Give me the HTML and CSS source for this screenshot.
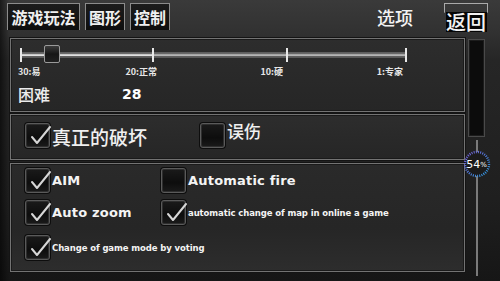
FILE: index.html
```html
<!DOCTYPE html>
<html lang="zh">
<head>
<meta charset="utf-8">
<link rel="stylesheet" href="styles.css">
</head>
<body>
<div class="screen">
  <header class="topbar">
    <nav class="tabs">
      <div class="tab t1">游戏玩法</div>
      <div class="tab t2">图形</div>
      <div class="tab t3">控制</div>
    </nav>
    <div class="title">选项</div>
    <div class="back"><span>返回</span></div>
  </header>
  <div class="main">
    <div class="panels">
      <section class="panel p1">
        <div class="track">
          <span class="tick"></span><span class="seg seg1 lit"></span>
          <span class="tick"></span><span class="seg seg2"></span>
          <span class="tick"></span><span class="seg seg3"></span>
          <span class="tick"></span>
          <span class="thumb"></span>
        </div>
        <div class="labels">
          <span class="lb lb1">30:易</span>
          <span class="lb lb2">20:正常</span>
          <span class="lb lb3">10:硬</span>
          <span class="lb lb4">1:专家</span>
        </div>
        <div class="diff">
          <span class="diff-name">困难</span>
          <span class="diff-val">28</span>
        </div>
      </section>
      <section class="panel p2">
        <div class="opt opt-a">
          <span class="box on"><svg viewBox="0 0 26 26"><path d="M5 14 L10 20 L23 4" /></svg></span>
          <span class="cn big">真正的破坏</span>
        </div>
        <div class="opt opt-b">
          <span class="box"></span>
          <span class="cn mid">误伤</span>
        </div>
      </section>
      <section class="panel p3">
        <div class="grid">
          <div class="opt">
            <span class="box on"><svg viewBox="0 0 26 26"><path d="M5 14 L10 20 L23 4" /></svg></span>
            <span class="en large">AIM</span>
          </div>
          <div class="opt">
            <span class="box"></span>
            <span class="en large">Automatic fire</span>
          </div>
          <div class="opt r2">
            <span class="box on"><svg viewBox="0 0 26 26"><path d="M5 14 L10 20 L23 4" /></svg></span>
            <span class="en large">Auto zoom</span>
          </div>
          <div class="opt r2">
            <span class="box on"><svg viewBox="0 0 26 26"><path d="M5 14 L10 20 L23 4" /></svg></span>
            <span class="en small">automatic change of map in online a game</span>
          </div>
          <div class="opt r3 wide">
            <span class="box on"><svg viewBox="0 0 26 26"><path d="M5 14 L10 20 L23 4" /></svg></span>
            <span class="en small">Change of game mode by voting</span>
          </div>
        </div>
      </section>
    </div>
    <aside class="scroll">
      <div class="scroll-box"></div>
      <div class="scroll-line">
        <div class="badge">
          <svg viewBox="0 0 28 28"><defs><linearGradient id="rg" x1="0" y1="0" x2="1" y2="1"><stop offset="0" stop-color="#7a5bd8"/><stop offset="1" stop-color="#2aa0e8"/></linearGradient></defs><circle cx="14" cy="14" r="12" fill="#1b1b1b" stroke="url(#rg)" stroke-width="2.4" stroke-dasharray="1 1.2"/></svg>
          <span class="pct">54<small>%</small></span>
        </div>
      </div>
    </aside>
  </div>
</div>
</body>
</html>
```
FILE: styles.css
```css
* { box-sizing: border-box; }
html, body { margin: 0; padding: 0; }
body {
  width: 500px; height: 281px; overflow: hidden;
  background: #1b1b1b;
  font-family: "Noto Sans CJK SC", "DejaVu Sans", sans-serif;
  color: #f2f2f2;
}
.screen {
  width: 500px; height: 281px;
  background:
    linear-gradient(90deg, rgba(0,0,0,0.55) 0, rgba(0,0,0,0) 9px),
    linear-gradient(180deg, #3a3a3a 0, #323232 30px, #262626 60px, #1f1f1f 200px, #161616 281px);
  display: flex; flex-direction: column;
}
.topbar {
  height: 38px; display: flex; align-items: flex-start;
  padding: 3px 0 0 7px;
}
.tabs { display: flex; gap: 5px; }
.tab {
  height: 27px; padding: 0 4px;
  background: linear-gradient(#1c1c1c, #0e0e0e);
  border: 1px solid #8c8c8c; border-bottom: none;
  font-size: 16px; font-weight: 700; line-height: 26px;
  color: #f0f0f0; white-space: nowrap; text-align: center;
}
.t1 { width: 73px; padding: 0; }
.t2, .t3 { width: 40px; padding: 0; }
.title {
  margin-left: 207px; margin-top: 3px;
  font-size: 18px; line-height: 22px; font-weight: 500;
}
.back {
  margin-left: 31px; width: 44px; height: 30px;
  border: 1px solid #999; border-bottom: none;
  border-image: linear-gradient(#aaa 0, #aaa 30%, transparent 32%) 1;
  padding: 8px 0 0 1px;
}
.back span {
  display: block; background: #050505;
  font-size: 20px; line-height: 20px; font-weight: 500; letter-spacing: 0;
}
.main { display: flex; padding-left: 10px; height: 243px; }
.panels { width: 455px; display: flex; flex-direction: column; }
.panel {
  border: 1px solid #737373;
  box-shadow: 0 0 0 1px #141414, inset 0 0 0 1px #1a1a1a;
  background: linear-gradient(180deg, #2d2d2d, #262626);
  position: relative;
}
.p1 { height: 74px; }
.p2 { height: 46px; margin-top: 2px; display: flex; }
.p3 { height: 109px; margin-top: 3px;
  background: linear-gradient(180deg, #2a2a2a, #262626 60%, #2d2d2d); }

/* slider */
.track {
  position: relative; display: flex; align-items: center;
  height: 14px; margin: 9px 0 0 9px; width: 390px;
}
.tick { width: 2px; height: 14px; background: #e8e8e8; flex: none; }
.seg {
  height: 6px; flex: none;
  background: linear-gradient(180deg, #5a5a5a 0, #6a6a6a 30%, #b5b5b5 45%, #b5b5b5 60%, #606060 70%, #555 100%);
}
.seg.lit { background: linear-gradient(180deg, #5a5a5a 0, #6d6d6d 30%, #e0e0e0 45%, #e0e0e0 60%, #626262 70%, #555 100%); }
.seg1 { width: 130px; }
.seg2 { width: 132px; }
.seg3 { width: 117px; }
.thumb {
  position: absolute; left: 24px; top: -3px;
  width: 16px; height: 18px; border-radius: 2px;
  background: linear-gradient(#3c3c3c, #161616 50%, #202020);
  border: 1px solid #9a9a9a;
}
.labels {
  display: flex; margin: 5px 0 0 7px; height: 10px;
  font-size: 9px; line-height: 10px; font-weight: 700; color: #e6e6e6;
}
.lb { display: block; flex: none; }
.lb1 { width: 42px; }
.lb2 { width: 97px; text-align: right; }
.lb3 { width: 126px; text-align: right; }
.lb4 { width: 120px; text-align: right; }
.diff { display: flex; align-items: center; margin: 7px 0 0 7px; height: 20px; }
.diff-name { width: 104px; font-size: 16px; font-weight: 500; color: #ececec; }
.diff-val { font-family: "DejaVu Sans", sans-serif; font-weight: 700; font-size: 14px; color: #fff; }

/* checkboxes */
.opt { display: flex; align-items: center; }
.box {
  width: 25px; height: 25px; flex: none; position: relative;
  border: 1px solid #5a5a5a; border-radius: 3px;
  background: linear-gradient(180deg, #1a1a1a, #0d0d0d 60%, #1a1a1a);
  box-shadow: inset 0 0 0 1px #2e2e2e, 0 0 0 1px #0d0d0d;
}
.box svg {
  position: absolute; left: 0; top: -1px; width: 28px; height: 26px; overflow: visible;
}
.box svg path {
  fill: none; stroke: #d6d6d6; stroke-width: 2; stroke-linecap: round; stroke-linejoin: round;
}
.p2 .opt-a { margin: 8px 0 0 14px; align-items: flex-start; }
.p2 .opt-a .cn { margin-top: 3px; }
.p2 .opt-b { margin: 8px 0 0 53px; align-items: flex-start; }
.p2 .opt-b .cn { margin-top: -3px; margin-left: 2px; }
.cn { font-weight: 500; color: #f0f0f0; margin-left: 2px; }
.cn.big { font-size: 19px; line-height: 22px; }
.cn.mid { font-size: 17px; line-height: 22px; }

.grid {
  display: grid; grid-template-columns: 136px auto;
  padding: 4px 0 0 14px; row-gap: 7px;
}
.grid .wide { grid-column: 1 / 3; margin-top: 3px; }
.en {
  font-family: "DejaVu Sans", sans-serif; font-weight: 700; color: #f4f4f4;
  margin-left: 2px; white-space: nowrap;
}
.en.large { font-size: 13px; letter-spacing: 0.2px; }
.en.small { font-size: 8.5px; letter-spacing: -0.1px; }

/* scroll column */
.scroll { width: 17px; margin-left: 3px; display: flex; flex-direction: column; align-items: center; }
.scroll-box {
  width: 17px; height: 98px; margin-top: 1px;
  background: #0c0c0c; border: 1px solid #4a4a4a;
  box-shadow: inset 0 0 0 1px #1c1c1c;
}
.scroll-line {
  position: relative; width: 2px; height: 136px; margin-top: 3px;
  background: #7a7a7a;
}
.badge {
  position: absolute; left: -13px; top: 10px; width: 28px; height: 28px;
}
.badge svg { position: absolute; left: 0; top: 0; width: 28px; height: 28px; }
.pct {
  position: absolute; left: 0; top: 0; width: 28px; height: 28px;
  display: flex; align-items: center; justify-content: center;
  font-family: "DejaVu Sans", sans-serif; font-size: 11px; color: #fff;
}
.pct small { font-size: 7px; margin-top: 2px; }
```
